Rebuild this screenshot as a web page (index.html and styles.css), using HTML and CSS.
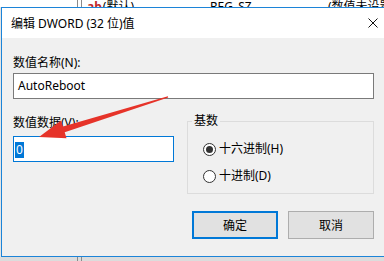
FILE: index.html
```html
<!DOCTYPE html>
<html lang="zh-CN">
<head>
  <meta charset="UTF-8">
  <title>编辑 DWORD (32 位)值</title>
  <link rel="stylesheet" href="styles.css">
</head>
<body>
  <div class="list-row">
    <span></span>
    <span class="col-sep"></span>
    <span class="reg-name"><b class="reg-icon">ab</b>(默认)</span>
    <span>REG_SZ</span>
    <span>(数值未设置)</span>
  </div>

  <div class="dialog">
    <div class="titlebar">
      <span class="title">编辑 DWORD (32 位)值</span>
      <span class="close-btn">
        <svg width="10" height="10" viewBox="0 0 10 10">
          <path d="M0.5 0.5 L9.5 9.5 M9.5 0.5 L0.5 9.5" stroke="#111" stroke-width="1" fill="none"/>
        </svg>
      </span>
    </div>
    <div class="content">
      <label class="field-label">数值名称(N):</label>
      <div class="field name-field">AutoReboot</div>
      <div class="row">
        <div class="data-col">
          <label class="field-label">数值数据(V):</label>
          <div class="field data-field"><span class="sel">0</span></div>
        </div>
        <fieldset class="base">
          <legend>基数</legend>
          <div class="radios">
            <label class="radio"><input type="radio" name="base" checked>十六进制(H)</label>
            <label class="radio"><input type="radio" name="base">十进制(D)</label>
          </div>
        </fieldset>
      </div>
      <div class="buttons">
        <button class="btn btn-default">确定</button>
        <button class="btn">取消</button>
      </div>
    </div>
  </div>

  <div class="list-row list-foot">
    <span></span>
    <span class="col-sep"></span>
  </div>

  <svg class="arrow" width="384" height="261" viewBox="0 0 384 261">
    <polygon points="39,137 61,120.5 63,126.4 167.9,96.3 168.2,97.6 64.7,132.2 66.5,138.2" fill="#e63329"/>
  </svg>
</body>
</html>
```

FILE: styles.css
```css
*,
*::before,
*::after {
  margin: 0;
  padding: 0;
  box-sizing: border-box;
}
html, body {
  overflow: hidden;
}
body {
  position: relative;
  width: 384px;
  height: 261px;
  background: #e4e4e4;
  font-family: "Noto Sans", "Noto Sans CJK SC", sans-serif;
  font-size: 12px;
  color: #000;
}

/* registry list behind the dialog */
.list-row {
  display: grid;
  grid-template-columns: 77px 6px 122px 118px 1fr;
  align-items: end;
  height: 7px;
  overflow: hidden;
  background: #fff;
  line-height: 14px;
  white-space: nowrap;
}
.list-row span {
  padding-left: 5px;
}
.list-row .reg-name {
  padding-left: 4px;
}
.list-row .col-sep {
  height: 100%;
  padding: 0;
  border-left: 1px solid #8a8a8a;
  border-right: 1px solid #8a8a8a;
  width: 5px;
}
.reg-icon {
  color: #c0282a;
  font-weight: bold;
  margin-right: 1px;
}
.list-foot {
  height: 4px;
  background: #dcdcdc;
}

/* dialog */
.dialog {
  width: 396px;
  margin-left: 1px;
  border: 1px solid #1c84d8;
}
.titlebar {
  display: flex;
  justify-content: space-between;
  align-items: center;
  height: 30px;
  background: #fff;
}
.title {
  padding-left: 9px;
}
.close-btn {
  display: flex;
  align-items: center;
  justify-content: center;
  width: 46px;
  height: 30px;
}
.content {
  padding: 17px 22px 17px 11px;
  background: #f0f0f0;
}
.field-label {
  display: block;
  line-height: 16px;
}
.field {
  height: 26px;
  border: 1px solid #7a7a7a;
  background: #fff;
  padding: 0 4px;
  line-height: 24px;
}
.name-field {
  margin-top: 2px;
}
.row {
  display: flex;
  justify-content: space-between;
  margin-top: 16px;
}
.data-col {
  width: 161px;
}
.data-field {
  margin-top: 5px;
  padding-left: 1px;
  border-color: #0078d7;
}
.sel {
  display: inline-block;
  background: #0078d7;
  color: #fff;
  line-height: 16px;
  padding: 0 1px;
  vertical-align: middle;
}

/* radix group */
.base {
  width: 187px;
  height: 79px;
  border: 1px solid #dcdcdc;
  padding: 0 0 0 4px;
}
.base legend {
  padding: 0 2px;
  line-height: 12px;
}
.radios {
  display: flex;
  flex-direction: column;
  gap: 11px;
  padding: 14px 0 0 11px;
}
.radio {
  display: flex;
  align-items: center;
  gap: 3px;
  line-height: 16px;
}
.radio input {
  appearance: none;
  width: 13px;
  height: 13px;
  border: 1px solid #333;
  border-radius: 50%;
  background: #fff;
  display: grid;
  place-items: center;
}
.radio input:checked::after {
  content: "";
  width: 7px;
  height: 7px;
  border-radius: 50%;
  background: #333;
}

/* buttons */
.buttons {
  display: flex;
  justify-content: flex-end;
  gap: 10px;
  margin-top: 17px;
}
.btn {
  width: 86px;
  height: 28px;
  border: 1px solid #adadad;
  background: #e1e1e1;
  font: inherit;
  color: #000;
}
.btn-default {
  border: 2px solid #0078d7;
}

.arrow {
  position: absolute;
  top: 0;
  left: 0;
}
```
